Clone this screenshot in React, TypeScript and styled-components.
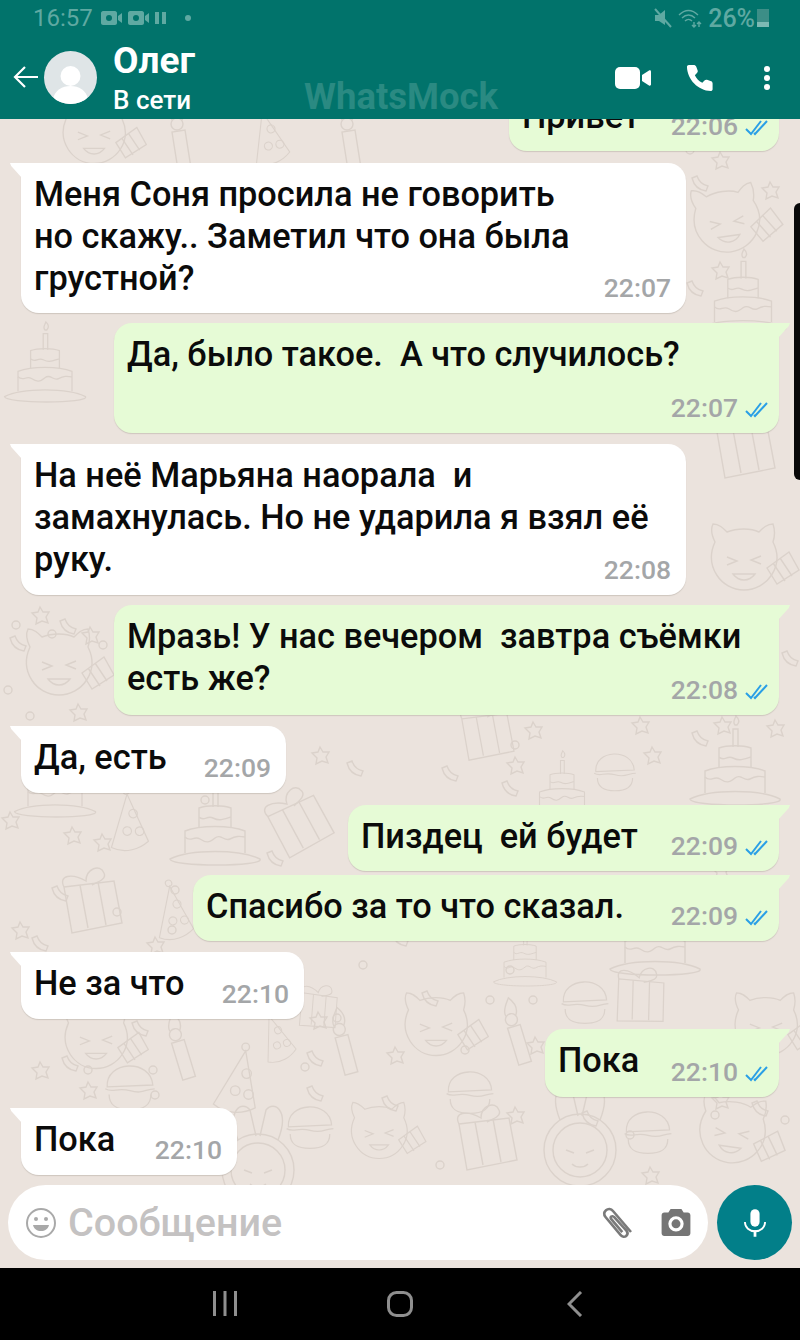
import React from "react";
import styled, { createGlobalStyle } from "styled-components";

const FONT = `Roboto, "Noto Sans", sans-serif`;

type Msg = {
  out?: boolean;
  width: number;
  height: number;
  gap: number;
  lines: string[];
  time: string;
  stacked?: boolean;
};

const messages: Msg[] = [
  { out: true, width: 270, height: 66, gap: -34, lines: ["Привет"], time: "22:06" },
  {
    width: 665,
    height: 150,
    gap: 12,
    lines: ["Меня Соня просила не говорить", "но скажу.. Заметил что она была", "грустной?"],
    time: "22:07",
  },
  { out: true, width: 665, height: 110, gap: 10, lines: ["Да, было такое.  А что случилось?"], time: "22:07", stacked: true },
  {
    width: 665,
    height: 151,
    gap: 11,
    lines: ["На неё Марьяна наорала  и", "замахнулась. Но не ударила я взял её", "руку."],
    time: "22:08",
  },
  { out: true, width: 665, height: 110, gap: 10, lines: ["Мразь! У нас вечером  завтра съёмки", "есть же?"], time: "22:08" },
  { width: 265, height: 67, gap: 11, lines: ["Да, есть"], time: "22:09" },
  { out: true, width: 431, height: 66, gap: 12, lines: ["Пиздец  ей будет"], time: "22:09" },
  { out: true, width: 586, height: 66, gap: 4, lines: ["Спасибо за то что сказал."], time: "22:09" },
  { width: 283, height: 67, gap: 11, lines: ["Не за что"], time: "22:10" },
  { out: true, width: 234, height: 68, gap: 10, lines: ["Пока"], time: "22:10" },
  { width: 216, height: 67, gap: 11, lines: ["Пока"], time: "22:10" },
];

// doodle placements on the wallpaper: [symbol, x, y, scale, rotation]
const doodles: [string, number, number, number, number][] = [
  ["cat", 60, 665, 1, 0],
  ["cat", 728, 222, 1, -8],
  ["cat", 97, 1040, 0.95, 0],
  ["cat", 437, 1027, 0.95, 0],
  ["cat", 733, 1133, 1, 8],
  ["cat", 767, 1027, 0.95, 0],
  ["cat", 380, 1133, 0.85, 0],
  ["cat", 95, 135, 0.95, 0],
  ["cat", 745, 560, 1, 0],
  ["bunny", 580, 1150, 1, 0],
  ["bunny", 258, 1170, 1, 0],
  ["cake", 215, 835, 1, 0],
  ["cake", 735, 775, 1, 0],
  ["cake", 743, 305, 0.95, 0],
  ["cake", 562, 795, 0.75, 0],
  ["cake", 55, 790, 0.9, 0],
  ["cake", 525, 965, 0.7, 0],
  ["cake", 655, 945, 1, 0],
  ["cake", 45, 375, 0.9, 0],
  ["gift", 300, 825, 1, -18],
  ["gift", 640, 1000, 0.9, 12],
  ["gift", 92, 905, 1, 0],
  ["gift", 745, 450, 1, 0],
  ["gift", 487, 1142, 1, 0],
  ["gift", 487, 735, 0.9, 0],
  ["gift", 318, 1010, 0.7, 15],
  ["hat", 130, 825, 0.85, -15],
  ["hat", 240, 1085, 0.95, 0],
  ["hat", 278, 1040, 0.7, -30],
  ["hat", 175, 915, 0.8, -20],
  ["hat", 270, 140, 0.8, -25],
  ["candle", 182, 1060, 1, -8],
  ["candle", 345, 1055, 1, -6],
  ["candle", 518, 1045, 1, -8],
  ["candle", 180, 150, 1, 0],
  ["candle", 350, 150, 1, 0],
  ["burger", 130, 1085, 0.95, 0],
  ["burger", 310, 1125, 0.9, 0],
  ["burger", 470, 1090, 0.9, 0],
  ["burger", 585, 1000, 0.9, 0],
  ["burger", 648, 1130, 0.9, 0],
  ["burger", 615, 770, 0.8, 0],
];

// small filler marks, [kind, x, y]
const marks: [string, number, number][] = [
  ["star", 40, 615], ["star", 90, 635], ["star", 78, 712], ["star", 10, 820], ["star", 72, 835], ["star", 102, 842],
  ["star", 155, 945], ["star", 40, 1070], ["star", 88, 1090], ["star", 318, 1020], ["star", 395, 1055],
  ["star", 533, 730], ["star", 640, 725], ["star", 515, 765], ["star", 652, 755], ["star", 722, 725], ["star", 775, 728],
  ["star", 720, 1045], ["star", 735, 905], ["star", 720, 870], ["star", 535, 1045], ["star", 720, 1100],
  ["star", 320, 755], ["star", 515, 1115], ["star", 650, 1175], ["star", 720, 160],
  ["star", 770, 190], ["star", 720, 270], ["star", 665, 855], ["star", 20, 930],
  ["ring", 16, 625], ["ring", 52, 634], ["ring", 103, 645], ["ring", 8, 690], ["ring", 30, 716], ["ring", 205, 800],
  ["ring", 172, 930], ["ring", 117, 912], ["ring", 175, 890], ["ring", 88, 1070], ["ring", 153, 1070], ["ring", 88, 1138],
  ["ring", 265, 905], ["ring", 337, 1018], ["ring", 363, 965], ["ring", 305, 1067], ["ring", 155, 1095], ["ring", 465, 1050],
  ["ring", 515, 745], ["ring", 490, 1000], ["ring", 533, 1000], ["ring", 715, 1115], ["ring", 690, 1040],
  ["ring", 690, 150], ["ring", 785, 1120], ["ring", 510, 970], ["ring", 630, 1135], ["ring", 440, 1165],
  ["conf", 18, 645], ["conf", 68, 628], ["conf", 60, 895], ["conf", 40, 945], ["conf", 140, 1030],
  ["conf", 70, 1065], ["conf", 315, 1060], ["conf", 315, 1095], ["conf", 390, 1105], ["conf", 400, 940], ["conf", 450, 775],
  ["conf", 510, 790], ["conf", 700, 740], ["conf", 760, 1110], ["conf", 430, 1000], ["conf", 590, 1120],
  ["conf", 700, 185], ["conf", 695, 290], ["conf", 355, 770], ["conf", 275, 860], ["conf", 710, 625], ["conf", 790, 660],
];

export default function App() {
  return (
    <Screen>
      <GlobalStyle />
      <Header>
        <StatusBar>
          <StatusGroup>
            <StatusTime>16:57</StatusTime>
            <VideoGlyph />
            <VideoGlyph />
            <PauseGlyph />
            <StatusDot />
          </StatusGroup>
          <StatusGroup>
            <svg width="18" height="20" viewBox="0 0 18 20" fill="#5fa9a2">
              <path d="M1 7h4l6-5v15l-6-4H1z" />
              <path d="M1 1l16 18" stroke="#5fa9a2" strokeWidth="2" />
            </svg>
            <svg width="24" height="20" viewBox="0 0 24 20" fill="none" stroke="#5fa9a2" strokeWidth="1.4">
              <path d="M1 7c6-6 13-6 19 0M4 10c4-4 9-4 13 0M7 13c2-2 5-2 7 0" />
              <path d="M16 14v5m-2-2l2 2 2-2M21 19v-5m-2 2l2-2 2 2" />
            </svg>
            <StatusPercent>26%</StatusPercent>
            <BatteryGlyph>
              <BatteryFill />
            </BatteryGlyph>
          </StatusGroup>
        </StatusBar>
        <Toolbar>
          <BackButton>
            <svg width="26" height="26" viewBox="0 0 26 26" fill="none" stroke="#fff" strokeWidth="2.2">
              <path d="M25 13H2M12 3L2 13l10 10" />
            </svg>
          </BackButton>
          <Avatar>
            <svg width="53" height="53" viewBox="0 0 53 53" fill="#fff">
              <circle cx="26.5" cy="25" r="10" />
              <path d="M9 48c2-9 9-13 17.500-13S42 39 44 48c-5 4-11 5-17.500 5S14 52 9 48z" />
            </svg>
          </Avatar>
          <Contact>
            <ContactName>Олег</ContactName>
            <ContactState>В сети</ContactState>
          </Contact>
          <Watermark>WhatsMock</Watermark>
          <Actions>
            <svg width="36" height="22" viewBox="0 0 36 22" fill="#fff">
              <rect x="0" y="0" width="25" height="22" rx="5" />
              <path d="M27 8l7-4.500c1-.5 2 0 2 1v13c0 1-1 1.500-2 1l-7-4.500z" />
            </svg>
            <svg width="28" height="28" viewBox="0 0 30 30" fill="#fff">
              <path d="M8 1c1.500 0 2.500.5 3 2l1.500 4c.3 1 0 2-1 3L9.500 12c1.500 3.500 4.500 6.500 8 8l2-2c1-1 2-1.200 3-1l4.500 1.500c1 .4 1.500 1.300 1.500 2.500V27c0 1-1 2-2 2C13 28.500 1.500 17 1 3c0-1 1-2 2-2z" />
            </svg>
            <MenuDots>
              <MenuDot />
              <MenuDot />
              <MenuDot />
            </MenuDots>
          </Actions>
        </Toolbar>
      </Header>

      <Chat>
        <Wall />
        <Messages>
          {messages.map((m, i) => (
            <Bubble key={i} $out={m.out} $width={m.width} $height={m.height} $gap={m.gap} $stacked={m.stacked}>
              <BubbleText $stacked={m.stacked}>
                {m.lines.map((l, j) => (
                  <Line key={j}>{l}</Line>
                ))}
              </BubbleText>
              <Meta>
                <Time>{m.time}</Time>
                {m.out && <Ticks />}
              </Meta>
            </Bubble>
          ))}
        </Messages>
        <Composer>
          <InputPill>
            <svg width="32" height="32" viewBox="0 0 32 32" fill="none" stroke="#a9a9a9" strokeWidth="2">
              <circle cx="16" cy="16" r="14" />
              <circle cx="11" cy="12" r="2" fill="#a9a9a9" stroke="none" />
              <circle cx="21" cy="12" r="2" fill="#a9a9a9" stroke="none" />
              <path d="M8 18h16c-1 4-4 6-8 6s-7-2-8-6z" fill="#a9a9a9" stroke="none" />
            </svg>
            <Placeholder>Сообщение</Placeholder>
            <PillIcons>
              <svg width="34" height="34" viewBox="0 0 34 34" fill="none" stroke="#7a7a7a" strokeWidth="2.6">
                <path d="M29 27L11 6c-2-2.500-5-2.500-7-.8s-2.300 4.500-.3 7l15 18c1.500 1.800 4 2 5.500.7s1.700-3.500.2-5.300L12 12c-.8-1-2-1-2.700-.4s-.8 1.600 0 2.600l11 13" transform="translate(2 -1)" />
              </svg>
              <svg width="30" height="27" viewBox="0 0 32 30" fill="#757575">
                <path fillRule="evenodd" d="M10 0h12l2.500 4H29c1.700 0 3 1.300 3 3v20c0 1.700-1.300 3-3 3H3c-1.700 0-3-1.300-3-3V7c0-1.700 1.300-3 3-3h4.500zM16 8a8.500 8.500 0 100 17 8.500 8.500 0 000-17zm0 3.500a5 5 0 110 10 5 5 0 010-10z" />
              </svg>
            </PillIcons>
          </InputPill>
          <MicButton>
            <svg width="22" height="28" viewBox="0 0 24 30" fill="#fff">
              <rect x="7" y="0" width="10" height="19" rx="5" />
              <path d="M1 14c0 6 5 10 11 10s11-4 11-10" fill="none" stroke="#fff" strokeWidth="2" />
              <rect x="10.500" y="23" width="3" height="7" />
            </svg>
          </MicButton>
        </Composer>
      </Chat>

      <NavBar>
        <NavSlot>
          <svg width="24" height="26" viewBox="0 0 24 26" fill="#8f8f8f">
            <rect x="0" y="0" width="3" height="25" />
            <rect x="10.500" y="0" width="3" height="25" />
            <rect x="21" y="0" width="3" height="25" />
          </svg>
        </NavSlot>
        <NavSlot>
          <svg width="26" height="26" viewBox="0 0 26 26" fill="none" stroke="#8f8f8f" strokeWidth="3">
            <rect x="1.500" y="1.500" width="23" height="23" rx="8" />
          </svg>
        </NavSlot>
        <NavSlot>
          <svg width="16" height="26" viewBox="0 0 16 26" fill="none" stroke="#8f8f8f" strokeWidth="3">
            <path d="M14 1L2 13l12 12" />
          </svg>
        </NavSlot>
      </NavBar>
      <EdgeHandle />
    </Screen>
  );
}

function VideoGlyph() {
  return (
    <svg width="21" height="14" viewBox="0 0 21 14" fill="#5fa9a2">
      <path fillRule="evenodd" d="M2 0h12c1 0 2 1 2 2v10c0 1-1 2-2 2H2c-1 0-2-1-2-2V2c0-1 1-2 2-2zm6 4a3 3 0 100 6 3 3 0 000-6z" />
      <path d="M17 5l4-3v10l-4-3z" />
    </svg>
  );
}

function PauseGlyph() {
  return (
    <svg width="12" height="14" viewBox="0 0 12 14" fill="#5fa9a2">
      <rect x="0" y="1" width="4" height="12" />
      <rect x="7" y="1" width="4" height="12" />
    </svg>
  );
}

function Ticks() {
  return (
    <TicksSvg width="23" height="16" viewBox="0 0 23 16" fill="none" stroke="#2a9fe6" strokeWidth="2">
      <path d="M1 9l5 5L16 1" />
      <path d="M9 13l1 1L22 1" />
    </TicksSvg>
  );
}

function Wall() {
  return (
    <WallSvg width="800" height="1150" viewBox="0 119 800 1150" fill="none" stroke="#dbd2cb" strokeWidth="1.4">
      <defs>
        <g id="cat">
          <path d="M-30 -18c-4-8-4-14-2-18 6 0 10 4 14 8 10-4 24-4 32 0 4-4 8-8 14-8 2 6 2 12 0 18 12 24-6 48-29 48s-40-24-29-48z" />
          <path d="M-18 -3l10 4-10 4M16 -4l-10 4 10 4M-12 14c6 8 16 8 22 0z" />
          <path d="M22 8l22-16 10 18-22 14zM28 3l12 18M35 -2l12 18" />
        </g>
        <g id="bunny">
          <circle r="36" />
          <circle r="27" />
          <path d="M-20 -30c-12 -30 4 -40 12 -30l6 26M20 -30c12 -30 -4 -40 -12 -30l-6 26" />
          <path d="M-14 0l8 3M14 0l-8 3M-8 14c4 4 12 4 16 0" />
        </g>
        <g id="cake">
          <path d="M-45 24c20-10 70-10 90 0 5 8-90 8-90 0z" />
          <path d="M-30 18V-4c15-6 45-6 60 0v22" />
          <path d="M-30 2c6 6 9-2 15 2s9 4 15-1 9 4 15 1 9-3 15-2" />
          <path d="M-16 -7v-20c8-3 24-3 32 0v20M-16 -18c5 5 8-2 14 1s8 2 18-1" />
          <path d="M-2 -28v-18h5v18M0 -50c-3-3 0-6 1-9 3 3 4 6 1 9z" />
        </g>
        <g id="gift">
          <path d="M-28 -18l50 -6 8 42-50 10z" />
          <path d="M-12 -20l8 43M6 -23l8 43" />
          <path d="M-28 -18c-6 -12 8 -14 22 -6 0 -12 14 -18 18 -8 3 6 -6 9 -12 12" />
        </g>
        <g id="hat">
          <path d="M6 -36l-34 56c14 12 32 10 44 4z" />
          <circle cx="-5" cy="6" r="5" />
          <circle cx="7" cy="-12" r="5" />
          <circle cx="9" cy="10" r="5" />
          <circle cx="6" cy="-40" r="4" />
        </g>
        <g id="candle">
          <path d="M-8 -18l6 38 13 -2 -6 -38z" />
          <circle cx="-3" cy="-26" r="6" />
          <path d="M-8 -30c-3-6 3-14 5-18 4 4 9 10 5 18" />
        </g>
        <g id="burger">
          <path d="M-24 2c-2-28 46-30 48-2z" />
          <path d="M-26 4c8 5 12-2 26 2s16-2 26-2" />
          <path d="M-22 10c0 12 8 16 22 16s22-4 22-16" />
        </g>
        <g id="star">
          <path d="M0 -8l3 5 6 0-3 5 2 6-6-2-6 3 1-6-5-5 6-1z" />
        </g>
        <g id="ring">
          <circle r="4" />
        </g>
        <g id="conf">
          <path d="M-8 -7c2 8 7 12 14 13l2-5c-5-1-9-4-11-10z" />
        </g>
      </defs>
      {doodles.map(([id, x, y, s, r], i) => (
        <use key={i} href={`#${id}`} transform={`translate(${x} ${y}) rotate(${r}) scale(${s})`} />
      ))}
      {marks.map(([id, x, y], i) => (
        <use key={i} href={`#${id}`} transform={`translate(${x} ${y})`} />
      ))}
    </WallSvg>
  );
}

const GlobalStyle = createGlobalStyle`
  html, body {
    margin: 0;
    padding: 0;
    background: #000;
  }
`;

const Screen = styled.div`
  position: relative;
  display: flex;
  flex-direction: column;
  width: 800px;
  height: 1340px;
  overflow: hidden;
  font-family: ${FONT};
`;

const Header = styled.header`
  position: relative;
  z-index: 1;
  flex: none;
  height: 119px;
  background-color: #01736b;
  color: #fff;
`;

const StatusBar = styled.div`
  display: flex;
  justify-content: space-between;
  align-items: center;
  height: 36px;
  padding: 0 31px 0 33px;
`;

const StatusGroup = styled.div`
  display: flex;
  align-items: center;
  gap: 6px;
`;

const StatusTime = styled.span`
  font-size: 24px;
  color: #5fa9a2;
  margin-right: 2px;
`;

const StatusPercent = styled.span`
  font-size: 25px;
  font-weight: 500;
  color: #5fa9a2;
`;

const StatusDot = styled.span`
  width: 6px;
  height: 6px;
  margin-left: 12px;
  border-radius: 50%;
  background-color: #5fa9a2;
`;

const BatteryGlyph = styled.span`
  display: flex;
  align-items: flex-end;
  width: 12px;
  height: 18px;
  margin-left: -4px;
  background-color: #3c8e87;
`;

const BatteryFill = styled.span`
  display: block;
  width: 100%;
  height: 5px;
  background-color: #7dbab4;
`;

const Toolbar = styled.div`
  position: relative;
  display: flex;
  align-items: flex-start;
  height: 83px;
`;

const BackButton = styled.div`
  margin: 28px 5px 0 13px;
  height: 26px;
`;

const Avatar = styled.div`
  width: 53px;
  height: 53px;
  margin-top: 15px;
  border-radius: 50%;
  overflow: hidden;
  background-color: #dfe5e7;
`;

const Contact = styled.div`
  display: flex;
  flex-direction: column;
  margin-left: 16px;
`;

const ContactName = styled.span`
  font-size: 37px;
  font-weight: 700;
  line-height: 50px;
`;

const ContactState = styled.span`
  font-size: 26px;
  font-weight: 500;
  line-height: 28px;
`;

const Watermark = styled.span`
  position: absolute;
  left: 304px;
  top: 37px;
  font-size: 36.5px;
  font-weight: 700;
  line-height: 48px;
  color: #2a8a82;
`;

const Actions = styled.div`
  display: flex;
  align-items: center;
  gap: 35px;
  height: 30px;
  margin: 27px 0 0 auto;
  padding-right: 30px;
`;

const MenuDots = styled.div`
  display: flex;
  flex-direction: column;
  gap: 3px;
  margin-left: 15px;
`;

const MenuDot = styled.span`
  width: 6px;
  height: 6px;
  border-radius: 50%;
  background-color: #fff;
`;

const Chat = styled.main`
  position: relative;
  flex: 1;
  display: flex;
  flex-direction: column;
  min-height: 0;
  background-color: #ebe3dd;
`;

const WallSvg = styled.svg`
  position: absolute;
  inset: 0;
`;

const Messages = styled.div`
  position: relative;
  flex: 1;
  display: flex;
  flex-direction: column;
  padding: 0 21px;
`;

const Bubble = styled.div<{ $out?: boolean; $width: number; $height: number; $gap: number; $stacked?: boolean }>`
  position: relative;
  display: flex;
  flex: none;
  flex-direction: ${(p) => (p.$stacked ? "column" : "row")};
  justify-content: space-between;
  box-sizing: border-box;
  align-self: ${(p) => (p.$out ? "flex-end" : "flex-start")};
  width: ${(p) => p.$width}px;
  height: ${(p) => p.$height}px;
  margin-top: ${(p) => p.$gap}px;
  padding: 10px ${(p) => (p.$out ? 11 : 15)}px 15px 13px;
  border-radius: 18px;
  background-color: ${(p) => (p.$out ? "#e6fbd6" : "#fff")};
  box-shadow: 0 1px 1px rgba(120, 110, 100, 0.25);
  border-top-left-radius: ${(p) => (p.$out ? 18 : 0)}px;
  border-top-right-radius: ${(p) => (p.$out ? 0 : 18)}px;

  &::before {
    content: "";
    position: absolute;
    top: 0;
    ${(p) => (p.$out ? "right: -11px;" : "left: -11px;")}
    width: 12px;
    height: 15px;
    background-color: ${(p) => (p.$out ? "#e6fbd6" : "#fff")};
    clip-path: ${(p) =>
      p.$out
        ? "polygon(0 0, 100% 0, 90% 20%, 0 100%)"
        : "polygon(0 0, 100% 0, 100% 100%, 10% 20%)"};
  }
`;

const BubbleText = styled.div<{ $stacked?: boolean }>`
  flex: ${(p) => (p.$stacked ? "none" : "1 1 0")};
  min-width: 0;
  font-size: 34.3px;
  font-weight: 500;
  line-height: 42px;
  color: #0b0b0b;
  white-space: pre;
`;

const Line = styled.div``;

const Meta = styled.div`
  display: flex;
  flex: none;
  align-items: center;
  align-self: flex-end;
  gap: 7px;
  height: 30px;
  margin-bottom: -5px;
`;

const Time = styled.span`
  font-size: 26.5px;
  font-weight: 500;
  line-height: 30px;
  color: #a4a6a8;
`;

const TicksSvg = styled.svg`
  margin-top: 4px;
`;

const Composer = styled.div`
  position: relative;
  display: flex;
  flex: none;
  gap: 9px;
  padding: 0 8px 8px;
`;

const InputPill = styled.div`
  display: flex;
  flex: 1;
  align-items: center;
  height: 75px;
  padding: 0 17px;
  border-radius: 38px;
  background-color: #fff;
`;

const Placeholder = styled.span`
  margin-left: 11px;
  font-size: 39.5px;
  font-weight: 500;
  color: #c4c2c2;
`;

const PillIcons = styled.div`
  display: flex;
  align-items: center;
  gap: 27px;
  margin-left: auto;
`;

const MicButton = styled.div`
  display: flex;
  flex: none;
  align-items: center;
  justify-content: center;
  width: 75px;
  height: 75px;
  border-radius: 50%;
  background-color: #027f89;
`;

const NavBar = styled.nav`
  display: flex;
  flex: none;
  align-items: center;
  justify-content: center;
  height: 72px;
  background-color: #000;
`;

const NavSlot = styled.div`
  display: flex;
  justify-content: center;
  width: 175px;
`;

const EdgeHandle = styled.div`
  position: absolute;
  top: 203px;
  right: 0;
  width: 6px;
  height: 277px;
  border-radius: 6px 0 0 6px;
  background-color: #080808;
`;
